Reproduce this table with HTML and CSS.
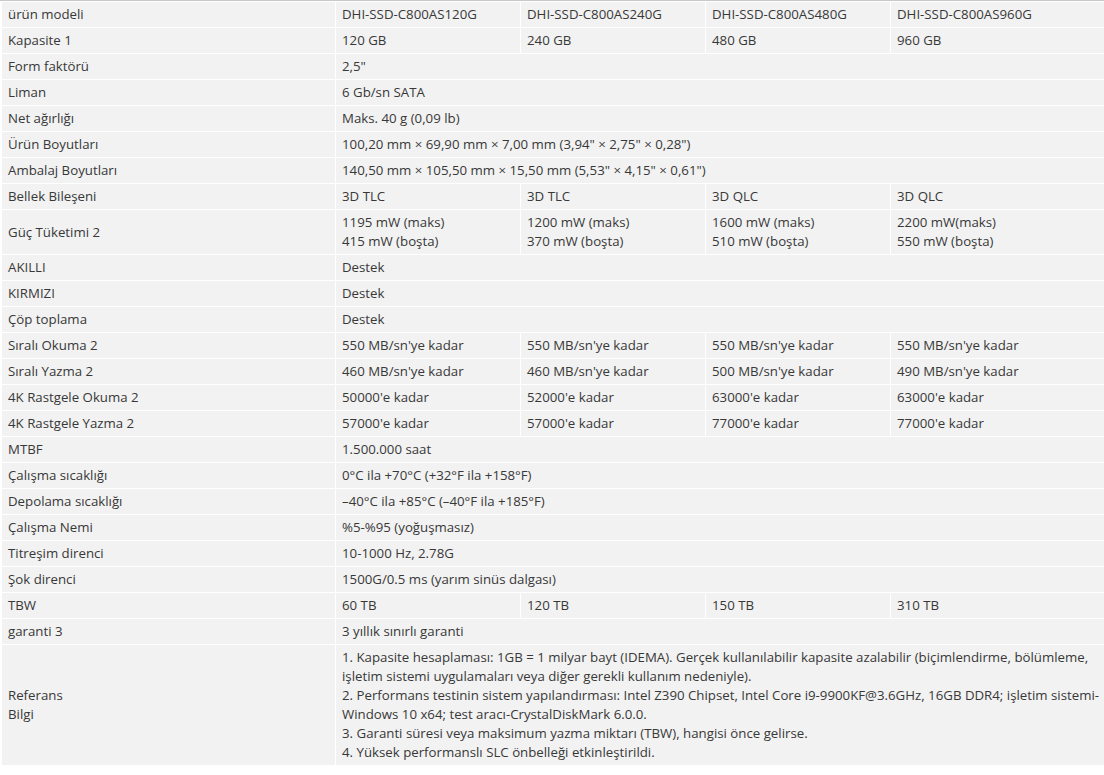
FILE: index.html
```html
<!DOCTYPE html>
<html lang="tr">
<head>
<meta charset="utf-8">
<title>Özellikler</title>
<link rel="stylesheet" href="styles.css">
</head>
<body>
<div class="wrap">
<table class="spec">
<colgroup>
<col class="c-label"><col class="c-val"><col class="c-val"><col class="c-val"><col class="c-last">
</colgroup>
<tbody>
<tr><td>ürün modeli</td><td>DHI-SSD-C800AS120G</td><td>DHI-SSD-C800AS240G</td><td>DHI-SSD-C800AS480G</td><td>DHI-SSD-C800AS960G</td></tr>
<tr><td>Kapasite 1</td><td>120 GB</td><td>240 GB</td><td>480 GB</td><td>960 GB</td></tr>
<tr><td>Form faktörü</td><td colspan="4">2,5"</td></tr>
<tr><td>Liman</td><td colspan="4">6 Gb/sn SATA</td></tr>
<tr><td>Net ağırlığı</td><td colspan="4">Maks. 40 g (0,09 lb)</td></tr>
<tr><td>Ürün Boyutları</td><td colspan="4">100,20 mm × 69,90 mm × 7,00 mm (3,94" × 2,75" × 0,28")</td></tr>
<tr><td>Ambalaj Boyutları</td><td colspan="4">140,50 mm × 105,50 mm × 15,50 mm (5,53" × 4,15" × 0,61")</td></tr>
<tr><td>Bellek Bileşeni</td><td>3D TLC</td><td>3D TLC</td><td>3D QLC</td><td>3D QLC</td></tr>
<tr><td>Güç Tüketimi 2</td><td>1195 mW (maks)<br>415 mW (boşta)</td><td>1200 mW (maks)<br>370 mW (boşta)</td><td>1600 mW (maks)<br>510 mW (boşta)</td><td>2200 mW(maks)<br>550 mW (boşta)</td></tr>
<tr><td>AKILLI</td><td colspan="4">Destek</td></tr>
<tr><td>KIRMIZI</td><td colspan="4">Destek</td></tr>
<tr><td>Çöp toplama</td><td colspan="4">Destek</td></tr>
<tr><td>Sıralı Okuma 2</td><td>550 MB/sn'ye kadar</td><td>550 MB/sn'ye kadar</td><td>550 MB/sn'ye kadar</td><td>550 MB/sn'ye kadar</td></tr>
<tr><td>Sıralı Yazma 2</td><td>460 MB/sn'ye kadar</td><td>460 MB/sn'ye kadar</td><td>500 MB/sn'ye kadar</td><td>490 MB/sn'ye kadar</td></tr>
<tr><td>4K Rastgele Okuma 2</td><td>50000'e kadar</td><td>52000'e kadar</td><td>63000'e kadar</td><td>63000'e kadar</td></tr>
<tr><td>4K Rastgele Yazma 2</td><td>57000'e kadar</td><td>57000'e kadar</td><td>77000'e kadar</td><td>77000'e kadar</td></tr>
<tr><td>MTBF</td><td colspan="4">1.500.000 saat</td></tr>
<tr><td>Çalışma sıcaklığı</td><td colspan="4">0°C ila +70°C (+32°F ila +158°F)</td></tr>
<tr><td>Depolama sıcaklığı</td><td colspan="4">–40°C ila +85°C (–40°F ila +185°F)</td></tr>
<tr><td>Çalışma Nemi</td><td colspan="4">%5-%95 (yoğuşmasız)</td></tr>
<tr><td>Titreşim direnci</td><td colspan="4">10-1000 Hz, 2.78G</td></tr>
<tr><td>Şok direnci</td><td colspan="4">1500G/0.5 ms (yarım sinüs dalgası)</td></tr>
<tr><td>TBW</td><td>60 TB</td><td>120 TB</td><td>150 TB</td><td>310 TB</td></tr>
<tr><td>garanti 3</td><td colspan="4">3 yıllık sınırlı garanti</td></tr>
<tr><td>Referans<br>Bilgi</td><td colspan="4">1. Kapasite hesaplaması: 1GB = 1 milyar bayt (IDEMA). Gerçek kullanılabilir kapasite azalabilir (biçimlendirme, bölümleme, işletim sistemi uygulamaları veya diğer gerekli kullanım nedeniyle).<br>2. Performans testinin sistem yapılandırması: Intel Z390 Chipset, Intel Core i9-9900KF@3.6GHz, 16GB DDR4; işletim sistemi-Windows 10 x64; test aracı-CrystalDiskMark 6.0.0.<br>3. Garanti süresi veya maksimum yazma miktarı (TBW), hangisi önce gelirse.<br>4. Yüksek performanslı SLC önbelleği etkinleştirildi.</td></tr>
</tbody>
</table>
</div>
</body>
</html>
```
FILE: styles.css
```css
html, body {
  margin: 0;
  padding: 0;
  background: #ffffff;
}
.wrap {
  border-top: 1px solid #c8c8c8;
  padding-left: 2px;
  overflow: hidden;
}
.spec {
  width: 1114px;
  table-layout: fixed;
  border-collapse: separate;
  border-spacing: 1px;
  margin: 0 0 0 -1px;
  font-family: "Open Sans", "Noto Sans", sans-serif;
  font-size: 13.25px;
  line-height: 19px;
  color: #383838;
}
.c-label { width: 333px; }
.c-val { width: 184px; }
.c-last { width: auto; }
.spec td {
  background: #f2f2f2;
  padding: 3px 5px 3px 6px;
  vertical-align: middle;
  text-align: left;
}
```
